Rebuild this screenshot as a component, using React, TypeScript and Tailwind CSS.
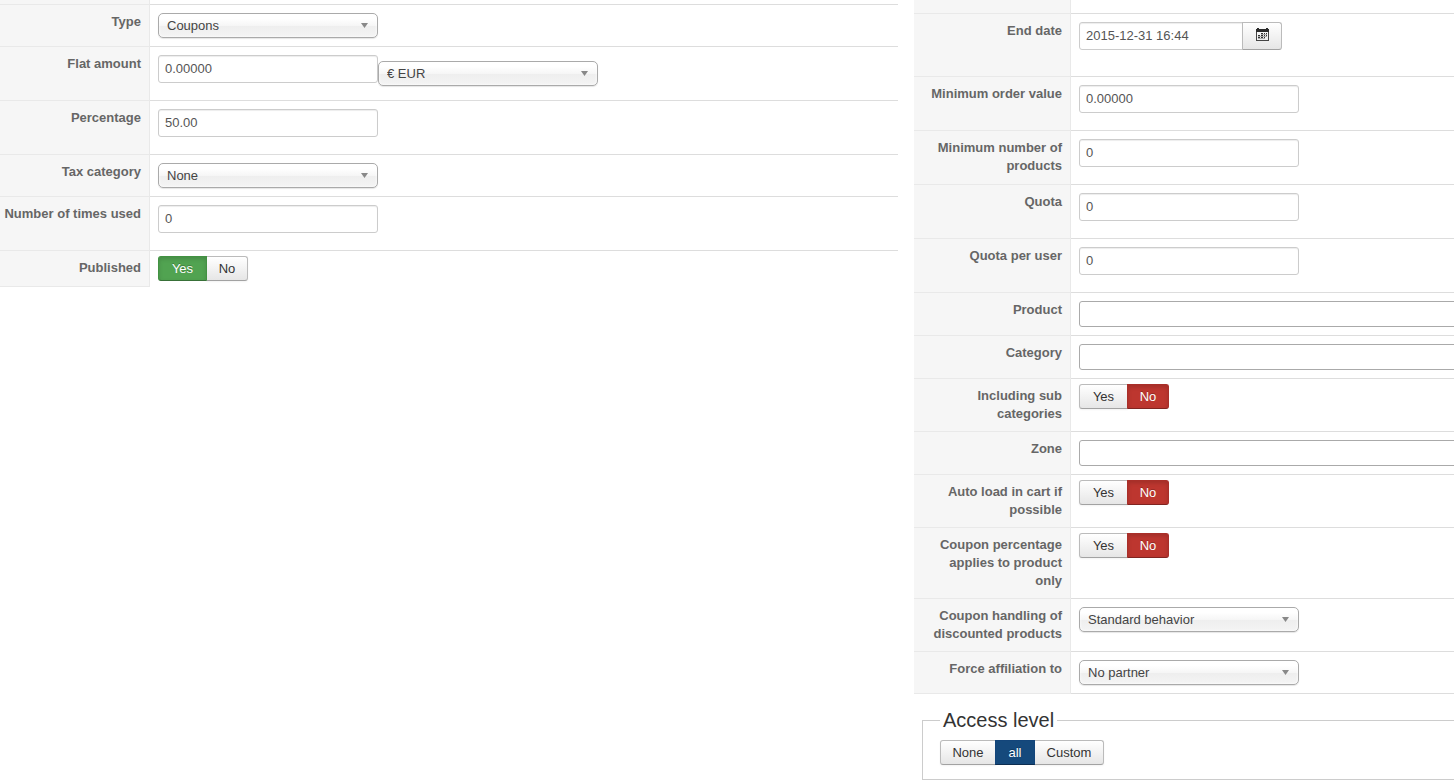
import { useState, type ReactNode } from "react";

type RowProps = {
  label?: string;
  htmlFor?: string;
  labelId?: string;
  labelClass: string;
  valueClass?: string;
  last?: boolean;
  children?: ReactNode;
};

function Row({ label, htmlFor, labelId, labelClass, valueClass = "p-2", last, children }: RowProps) {
  return (
    <div className="flex">
      <div
        className={`shrink-0 border-r border-b border-[#e9e9e9] bg-[#f6f6f6] pr-2 text-right font-bold text-[#666] ${labelClass}`}
      >
        {label && (
          <label id={labelId} htmlFor={htmlFor} className="block py-2 leading-[18px]">
            {label}
          </label>
        )}
      </div>
      <div className={`flex min-w-0 grow items-start border-b ${last ? "border-transparent" : "border-[#ddd]"} ${valueClass}`}>
        {children}
      </div>
    </div>
  );
}

function TextField({ id, value, className = "mb-[9px] w-[220px] rounded-[3px]" }: { id: string; value: string; className?: string }) {
  return (
    <input
      id={id}
      type="text"
      defaultValue={value}
      className={`h-7 border border-[#ccc] bg-white px-1.5 pb-0.5 text-[#555] shadow-[inset_0_1px_1px_rgba(0,0,0,0.075)] outline-none focus:border-[#52a8ec] ${className}`}
    />
  );
}

function Select({ id, options, label, className = "" }: { id: string; options: string[]; label?: string; className?: string }) {
  return (
    <div className={`relative w-[220px] shrink-0 ${className}`}>
      <select
        id={id}
        aria-label={label}
        className="block h-[25px] w-full appearance-none rounded-[5px] border border-[#aaa] bg-[linear-gradient(to_bottom,#fff_20%,#f6f6f6_50%,#eee_52%,#f4f4f4_100%)] pr-6 pl-2 text-[#444] shadow-[inset_0_0_3px_#fff,0_1px_1px_rgba(0,0,0,0.1)] outline-none"
      >
        {options.map((option) => (
          <option key={option}>{option}</option>
        ))}
      </select>
      <svg
        viewBox="0 0 7 5"
        className="pointer-events-none absolute top-2.5 right-2.5 h-[5px] w-[7px] fill-[#888]"
        aria-hidden="true"
      >
        <path d="M0 0h7L3.5 5z" />
      </svg>
    </div>
  );
}

function MultiSelect({ id }: { id: string }) {
  return (
    <input
      id={id}
      type="text"
      className="h-[26px] w-full rounded-[3px] border border-[#aaa] bg-white px-1.5 text-[#555] outline-none"
    />
  );
}

const tones = {
  green: "border-[#429242] border-b-[#387038] bg-[#51a351] text-white shadow-[inset_0_2px_4px_rgba(0,0,0,0.15)] [text-shadow:0_-1px_0_rgba(0,0,0,0.25)]",
  red: "border-[#a92f29] border-b-[#802420] bg-[#bd362f] text-white shadow-[inset_0_2px_4px_rgba(0,0,0,0.15)] [text-shadow:0_-1px_0_rgba(0,0,0,0.25)]",
  blue: "border-[#13457a] border-b-[#0d2d50] bg-[#15497c] text-white [text-shadow:0_-1px_0_rgba(0,0,0,0.25)]",
};

type Choice = { text: string; tone: keyof typeof tones; width: string };

const yesNo: Choice[] = [
  { text: "Yes", tone: "green", width: "w-[49px]" },
  { text: "No", tone: "red", width: "w-[42px]" },
];

const accessLevels: Choice[] = [
  { text: "None", tone: "blue", width: "w-[56px]" },
  { text: "all", tone: "blue", width: "w-[40px]" },
  { text: "Custom", tone: "blue", width: "w-[70px]" },
];

function Toggle({ choices, initial, labelledBy }: { choices: Choice[]; initial: string; labelledBy: string }) {
  const [selected, setSelected] = useState(initial);
  return (
    <div role="group" aria-labelledby={labelledBy} className="flex">
      {choices.map(({ text, tone, width }) => (
        <button
          key={text}
          type="button"
          aria-pressed={selected === text}
          onClick={() => setSelected(text)}
          className={`-ml-px h-[25px] border text-center leading-[18px] first:ml-0 first:rounded-l-[3px] last:rounded-r-[3px] ${width} ${
            selected === text
              ? `relative ${tones[tone]}`
              : "border-[#bbb] border-b-[#a2a2a2] bg-linear-to-b from-white to-[#e6e6e6] text-[#333] shadow-[0_1px_2px_rgba(0,0,0,0.05)]"
          }`}
        >
          {text}
        </button>
      ))}
    </div>
  );
}

function CalendarIcon() {
  return (
    <svg viewBox="0 0 13 13" className="h-[13px] w-[13px]" aria-hidden="true" shapeRendering="crispEdges">
      <path d="M1 0h2v1h7V0h2v1h1v3H0V1h1z" fill="#2b2b2b" />
      <path d="M0 4h1v8h11V4h1v9H0z" fill="#444" />
      <path
        d="M5 5h2v1H5zM8 5h1v1H8zM10 5h1v1h-1zM2 7h2v1H2zM5 7h2v1H5zM8 7h1v1H8zM10 7h1v1h-1zM2 9h2v1H2zM5 9h2v1H5zM8 9h1v1H8z"
        fill="#333"
      />
      <path d="M5 6h6v1H5zM2 8h9v1H2zM2 10h7v1H2z" fill="#aaa" />
    </svg>
  );
}

const leftLabel = "w-[150px] whitespace-nowrap";
const rightLabel = "w-[157px] pl-2";
const toggleCell = "px-2 py-[5px]";

export default function App() {
  return (
    <form className="grid grid-cols-[minmax(0,898fr)_minmax(0,540fr)] items-start gap-4 bg-white font-['Liberation_Sans',Arial,sans-serif] text-[13px] leading-[18px]">
      <section>
        <Row labelClass={leftLabel} valueClass="h-[5px]" />
        <Row label="Type" htmlFor="type" labelClass={leftLabel}>
          <Select id="type" options={["Coupons", "Discount"]} />
        </Row>
        <Row label="Flat amount" htmlFor="flat" labelClass={leftLabel}>
          <TextField id="flat" value="0.00000" />
          <Select id="currency" label="Currency" options={["€ EUR", "$ USD"]} className="mt-1.5" />
        </Row>
        <Row label="Percentage" htmlFor="percentage" labelClass={leftLabel}>
          <TextField id="percentage" value="50.00" />
        </Row>
        <Row label="Tax category" htmlFor="tax" labelClass={leftLabel}>
          <Select id="tax" options={["None"]} />
        </Row>
        <Row label="Number of times used" htmlFor="used" labelClass={leftLabel}>
          <TextField id="used" value="0" />
        </Row>
        <Row label="Published" labelId="published" labelClass={leftLabel} valueClass={toggleCell} last>
          <Toggle choices={yesNo} initial="Yes" labelledBy="published" />
        </Row>
      </section>

      <section className="overflow-hidden">
        <div className="-mr-4">
          <Row labelClass={rightLabel} valueClass="h-[14px]" />
          <Row label="End date" htmlFor="end" labelClass={rightLabel}>
            <div className="mb-[18px] flex">
              <TextField id="end" value="2015-12-31 16:44" className="w-[164px] rounded-l-[3px]" />
              <button
                type="button"
                aria-label="Open calendar"
                className="-ml-px flex h-7 w-10 items-center justify-center rounded-r-[3px] border border-[#bbb] border-b-[#a2a2a2] bg-linear-to-b from-white to-[#e6e6e6] pb-[3px]"
              >
                <CalendarIcon />
              </button>
            </div>
          </Row>
          <Row label="Minimum order value" htmlFor="min-value" labelClass={rightLabel}>
            <TextField id="min-value" value="0.00000" />
          </Row>
          <Row label="Minimum number of products" htmlFor="min-products" labelClass={rightLabel}>
            <TextField id="min-products" value="0" />
          </Row>
          <Row label="Quota" htmlFor="quota" labelClass={rightLabel}>
            <TextField id="quota" value="0" />
          </Row>
          <Row label="Quota per user" htmlFor="quota-user" labelClass={rightLabel}>
            <TextField id="quota-user" value="0" />
          </Row>
          <Row label="Product" htmlFor="product" labelClass={rightLabel} valueClass="py-2 pl-2">
            <MultiSelect id="product" />
          </Row>
          <Row label="Category" htmlFor="category" labelClass={rightLabel} valueClass="py-2 pl-2">
            <MultiSelect id="category" />
          </Row>
          <Row label="Including sub categories" labelId="sub-categories" labelClass={rightLabel} valueClass={toggleCell}>
            <Toggle choices={yesNo} initial="No" labelledBy="sub-categories" />
          </Row>
          <Row label="Zone" htmlFor="zone" labelClass={rightLabel} valueClass="py-2 pl-2">
            <MultiSelect id="zone" />
          </Row>
          <Row label="Auto load in cart if possible" labelId="auto-load" labelClass={rightLabel} valueClass={toggleCell}>
            <Toggle choices={yesNo} initial="No" labelledBy="auto-load" />
          </Row>
          <Row
            label="Coupon percentage applies to product only"
            labelId="product-only"
            labelClass={rightLabel}
            valueClass={toggleCell}
          >
            <Toggle choices={yesNo} initial="No" labelledBy="product-only" />
          </Row>
          <Row label="Coupon handling of discounted products" htmlFor="handling" labelClass={rightLabel}>
            <Select id="handling" options={["Standard behavior"]} />
          </Row>
          <Row label="Force affiliation to" htmlFor="affiliation" labelClass={rightLabel}>
            <Select id="affiliation" options={["No partner"]} />
          </Row>
          <fieldset className="mt-4 ml-2 border border-[#ccc] px-[17px] pt-[10px] pb-[14px]">
            <legend id="access" className="px-[3px] text-[20px] leading-5 text-[#333]">
              Access level
            </legend>
            <Toggle choices={accessLevels} initial="all" labelledBy="access" />
          </fieldset>
        </div>
      </section>
    </form>
  );
}
